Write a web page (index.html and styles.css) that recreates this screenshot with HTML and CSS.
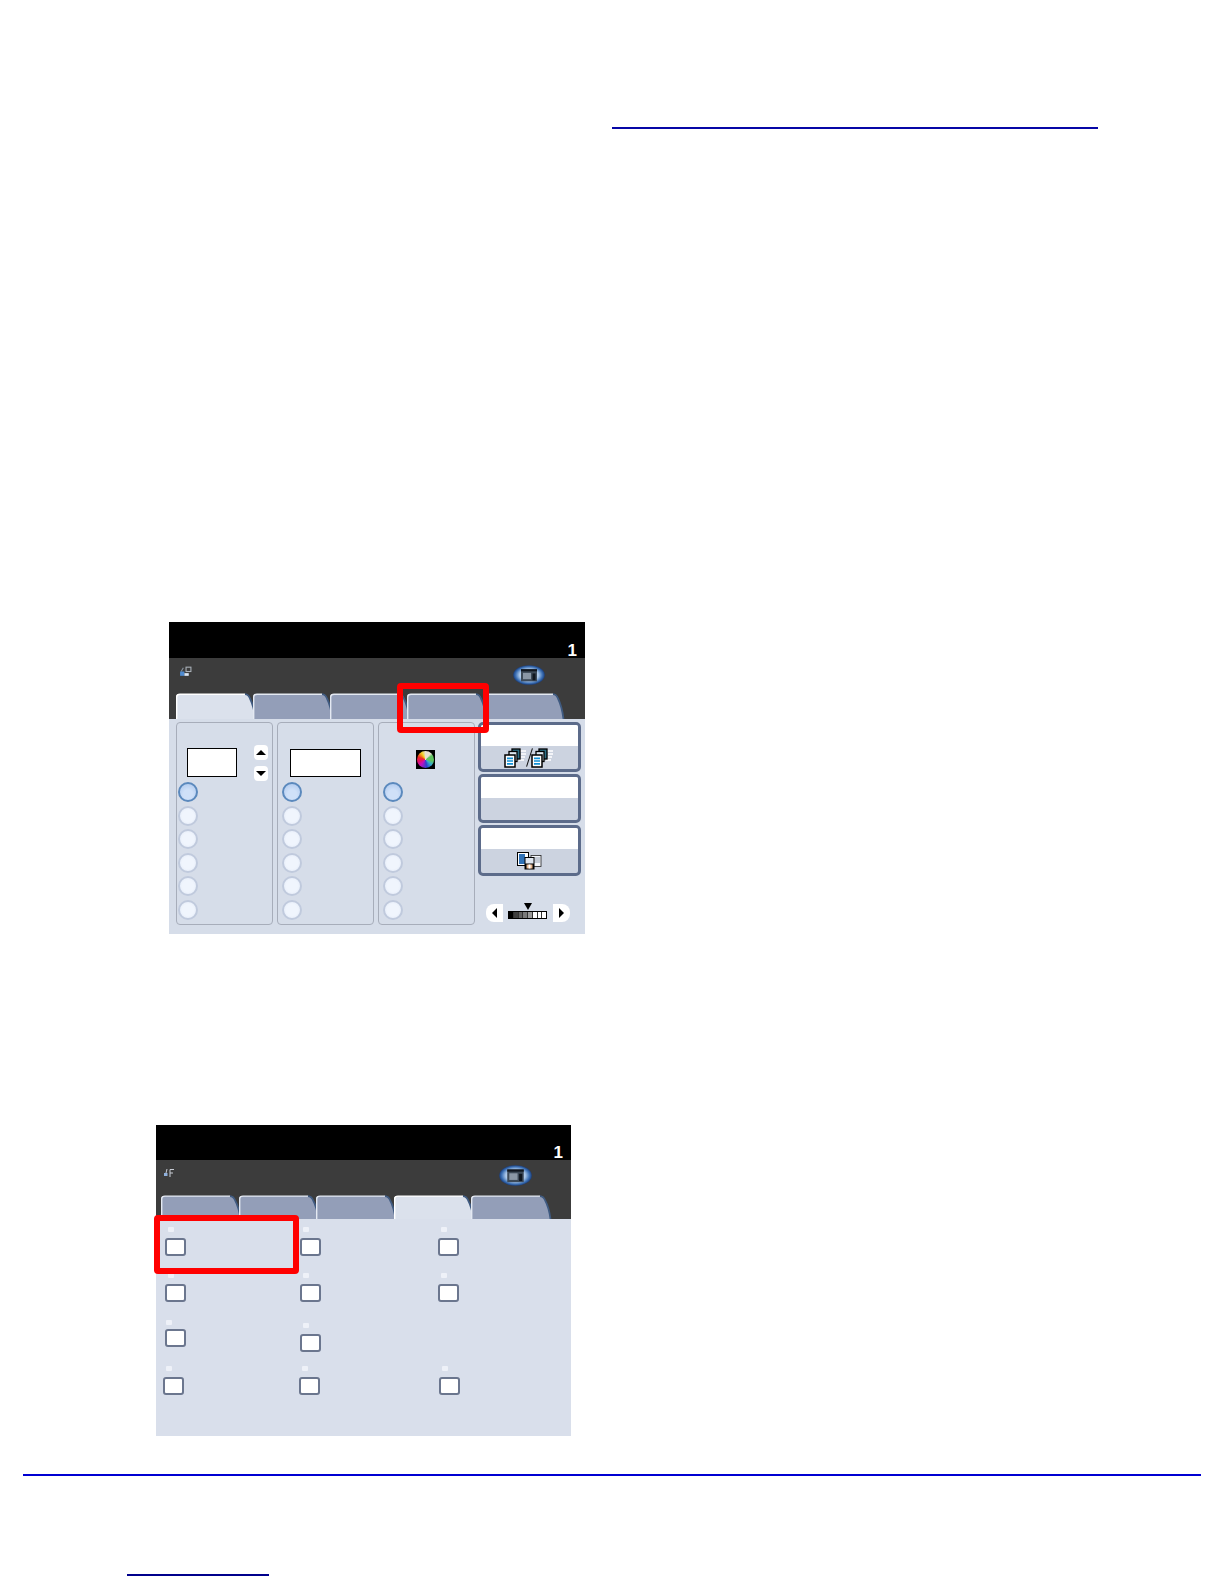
FILE: index.html
```html
<!DOCTYPE html>
<html lang="en">
<head>
<meta charset="utf-8">
<title>Copy screens</title>
<link rel="stylesheet" href="styles.css">
</head>
<body>
<svg class="defs" width="0" height="0" aria-hidden="true">
  <defs>
    <radialGradient id="oval" cx="50%" cy="50%" r="50%">
      <stop offset="0" stop-color="#f2f7fd"/>
      <stop offset="0.6" stop-color="#a9c6e8"/>
      <stop offset="0.85" stop-color="#3c70b4"/>
      <stop offset="1" stop-color="#1b3f7d"/>
    </radialGradient>
    <symbol id="tab" viewBox="0 0 81 26" preserveAspectRatio="none">
      <path class="tab-fill" d="M0 26V4Q0 1 4 1H69Q72.500 1 74 5Q78 13 79.500 26Z"/>
      <path class="tab-light" d="M.7 26V4Q.7 1.200 4 1.200H69"/>
      <path class="tab-dark" d="M69 1.200Q72.500 1.500 74 5.500Q78 13.500 79.500 26"/>
    </symbol>
    <symbol id="ovalicon" viewBox="0 0 32 19" preserveAspectRatio="none">
      <ellipse cx="16" cy="9.500" rx="15.800" ry="9.300" fill="url(#oval)"/>
      <rect x="8" y="4" width="16" height="11.500" fill="#3d4a58"/>
      <rect x="8" y="4" width="16" height="2" fill="#10161f"/>
      <rect x="10" y="7.500" width="8" height="6" fill="#8a97a6"/>
      <rect x="19.500" y="8" width="3" height="6.500" fill="#10161f"/>
    </symbol>
    <symbol id="stack" viewBox="0 0 24 20">
      <path d="M16 3h6M17 6h5M17 9h4M15 12h5" stroke="#fff" stroke-width="1.300"/>
      <rect x="8" y="1" width="8" height="10" fill="#2e6f86" stroke="#000" stroke-width="1.300"/>
      <rect x="5" y="3.500" width="8" height="10" fill="#dfe9f2" stroke="#000" stroke-width="1.300"/>
      <rect x="1" y="7" width="10" height="12" fill="#fff" stroke="#000" stroke-width="1.500"/>
      <path d="M3 10.300h6M3 13h6M3 15.800h6" stroke="#1391d6" stroke-width="1.700"/>
    </symbol>
  </defs>
</svg>

<main class="page">
  <div class="link-line line-top"></div>

  <section class="screen screen-a">
    <header class="screen-head"><span class="count">1</span></header>
    <div class="screen-bar">
      <div class="bar-top">
        <svg class="mini-icon" viewBox="0 0 12 10" aria-hidden="true"><rect x="6.500" y="1" width="4.500" height="4" fill="none" stroke="#a9b0b8" stroke-width="1"/><path d="M4 1.500L2 5" stroke="#8a94a0" stroke-width="1"/><rect x="1" y="5" width="4" height="4" fill="#4f8bd0"/><rect x="5" y="6.500" width="4" height="2.500" fill="#dbe6f4"/></svg>
        <svg class="oval-icon" aria-hidden="true"><use href="#ovalicon"/></svg>
      </div>
      <div class="tabs">
        <svg class="tab is-active" aria-hidden="true"><use href="#tab"/></svg>
        <svg class="tab" aria-hidden="true"><use href="#tab"/></svg>
        <svg class="tab" aria-hidden="true"><use href="#tab"/></svg>
        <svg class="tab" aria-hidden="true"><use href="#tab"/></svg>
        <svg class="tab" aria-hidden="true"><use href="#tab"/></svg>
      </div>
    </div>
    <div class="screen-body">
      <div class="panel">
        <div class="panel-top top-spin">
          <div class="field field-short"></div>
          <div class="spin">
            <span class="spin-btn"><span class="tri tri-up"></span></span>
            <span class="spin-btn"><span class="tri tri-down"></span></span>
          </div>
        </div>
        <div class="radios">
          <span class="radio is-on"></span><span class="radio"></span><span class="radio"></span><span class="radio"></span><span class="radio"></span><span class="radio"></span>
        </div>
      </div>
      <div class="panel panel-b">
        <div class="panel-top top-field">
          <div class="field field-long"></div>
        </div>
        <div class="radios">
          <span class="radio is-on"></span><span class="radio"></span><span class="radio"></span><span class="radio"></span><span class="radio"></span><span class="radio"></span>
        </div>
      </div>
      <div class="panel panel-c">
        <div class="panel-top top-wheel">
          <div class="wheel-box"><span class="wheel"></span></div>
        </div>
        <div class="radios">
          <span class="radio is-on"></span><span class="radio"></span><span class="radio"></span><span class="radio"></span><span class="radio"></span><span class="radio"></span>
        </div>
      </div>
      <div class="side">
        <div class="big-btn btn-one">
          <div class="btn-white"></div>
          <div class="btn-low">
            <svg class="stack" aria-hidden="true"><use href="#stack"/></svg>
            <span class="slash"></span>
            <svg class="stack" aria-hidden="true"><use href="#stack"/></svg>
          </div>
        </div>
        <div class="big-btn btn-two">
          <div class="btn-white"></div>
          <div class="btn-low"></div>
        </div>
        <div class="big-btn btn-three">
          <div class="btn-white"></div>
          <div class="btn-low">
            <svg class="sample" viewBox="0 0 25 18" aria-hidden="true">
              <rect x=".5" y=".5" width="11" height="13" fill="#fff" stroke="#000"/>
              <rect x="2" y="2" width="6" height="10" fill="#2f72b8"/>
              <rect x="14" y="3.500" width="10" height="11" fill="#f4f6fa" stroke="#222" stroke-width=".8"/>
              <path d="M16 6h7M16 8h7M16 10h7" stroke="#7c8aa0" stroke-width=".8"/>
              <rect x="7.500" y="5" width="10" height="12.500" fill="#000"/>
              <rect x="8.500" y="6" width="8" height="5.500" fill="#dfe6f0"/>
              <rect x="9.500" y="12.500" width="6" height="4" fill="#e8b890"/>
              <rect x="11.500" y="12.500" width="2" height="4" fill="#fff"/>
            </svg>
          </div>
        </div>
        <div class="pager">
          <span class="pager-btn pager-prev"><span class="tri tri-left"></span></span>
          <div class="meter">
            <span class="tri tri-down meter-mark"></span>
            <div class="meter-cells">
              <span class="cell c1"></span><span class="cell c2"></span><span class="cell c3"></span><span class="cell c4"></span><span class="cell c5"></span><span class="cell"></span><span class="cell"></span><span class="cell"></span>
            </div>
          </div>
          <span class="pager-btn pager-next"><span class="tri tri-right"></span></span>
        </div>
      </div>
    </div>
    <div class="callout callout-a"></div>
  </section>

  <section class="screen screen-b">
    <header class="screen-head"><span class="count">1</span></header>
    <div class="screen-bar">
      <div class="bar-top">
        <svg class="mini-icon" viewBox="0 0 12 10" aria-hidden="true"><rect x="1" y="5" width="3.500" height="3" fill="#8fb0dc"/><path d="M3 5L4 1M7 9V1.500h4M7 5h3" fill="none" stroke="#c8ccd4" stroke-width="1"/></svg>
        <svg class="oval-icon" aria-hidden="true"><use href="#ovalicon"/></svg>
      </div>
      <div class="tabs">
        <svg class="tab" aria-hidden="true"><use href="#tab"/></svg>
        <svg class="tab" aria-hidden="true"><use href="#tab"/></svg>
        <svg class="tab" aria-hidden="true"><use href="#tab"/></svg>
        <svg class="tab is-active" aria-hidden="true"><use href="#tab"/></svg>
        <svg class="tab" aria-hidden="true"><use href="#tab"/></svg>
      </div>
    </div>
    <div class="screen-body options">
      <div class="option"><span class="dot"></span><span class="check"></span></div>
      <div class="option"><span class="dot"></span><span class="check"></span></div>
      <div class="option"><span class="dot"></span><span class="check"></span></div>
      <div class="option"><span class="dot"></span><span class="check"></span></div>
      <div class="option"><span class="dot"></span><span class="check"></span></div>
      <div class="option"><span class="dot"></span><span class="check"></span></div>
      <div class="option option-tight"><span class="dot"></span><span class="check"></span></div>
      <div class="option option-low"><span class="dot"></span><span class="check"></span></div>
      <div class="option"></div>
      <div class="option option-out"><span class="dot"></span><span class="check"></span></div>
      <div class="option option-nudge"><span class="dot"></span><span class="check"></span></div>
      <div class="option option-in"><span class="dot"></span><span class="check"></span></div>
    </div>
    <div class="callout callout-b"></div>
  </section>

  <div class="rule"></div>
  <div class="link-line line-foot"></div>
</main>
</body>
</html>
```
FILE: styles.css
```css
* { box-sizing: border-box; }
html, body { margin: 0; background: #fff; }
body { font-family: "Liberation Sans", Arial, sans-serif; }
.defs { position: absolute; }

.page { height: 1584px; padding-top: 127px; overflow: hidden; }
.link-line { height: 2px; background: #0707a6; }
.line-top { width: 486px; margin-left: 612px; }
.rule { height: 2px; width: 1178px; margin: 38px 0 0 23px; background: #0000d2; }
.line-foot { width: 142px; margin: 98px 0 0 127px; background: #00008c; }

/* device screens */
.screen { position: relative; }
.screen-a { width: 416px; margin: 493px 0 0 169px; }
.screen-b { width: 415px; margin: 191px 0 0 156px; }

.screen-head { height: 36px; background: #000; display: flex; justify-content: flex-end; align-items: flex-end; padding: 0 8px 0 0; }
.screen-b .screen-head { height: 35px; padding-right: 8px; }
.count { color: #fff; font-weight: 700; font-size: 17px; line-height: 15px; }

.screen-bar { height: 61px; background: #3c3c3c; display: flex; flex-direction: column; }
.screen-b .screen-bar { height: 59px; }
.bar-top { height: 35px; position: relative; }
.mini-icon { position: absolute; left: 10px; top: 8px; width: 13px; height: 11px; }
.screen-b .mini-icon { left: 7px; top: 8px; width: 12px; height: 10px; }
.oval-icon { position: absolute; left: 344px; top: 7px; width: 32px; height: 20px; }
.screen-b .oval-icon { left: 343px; top: 5px; width: 33px; height: 21px; }

.tabs { display: flex; height: 26px; padding-left: 7px; }
.screen-b .tabs { height: 24px; padding-left: 5px; }
.tab { --tab-bg: #939eb8; --tab-top: #e4e9f2; width: 81px; height: 100%; margin-right: -4px; flex: none; display: block; }
.screen-b .tab { margin-right: -3.5px; }
.tab.is-active { --tab-bg: #dbe1ec; --tab-top: #fff; }
.tab-fill { fill: var(--tab-bg); }
.tab-light { fill: none; stroke: var(--tab-top); stroke-width: 1.4; }
.tab-dark { fill: none; stroke: #3f5a80; stroke-width: 1.8; }

.screen-body { background: #d6dde9; }
.screen-a .screen-body { height: 215px; display: flex; padding: 3px 0 0 7px; }

/* panels */
.panel { width: 97px; height: 203px; border: 1px solid #a7adba; border-radius: 4px; margin-right: 4px; flex: none; }
.panel-c { margin-right: 3px; }
.panel-top { height: 59px; position: relative; }
.top-spin { display: flex; padding: 25px 0 0 10px; }
.field { background: #fff; border: 1px solid #000; }
.field-short { width: 50px; height: 29px; }
.field-long { width: 71px; height: 28px; }
.top-field { padding: 26px 0 0 12px; }
.top-wheel { padding: 27px 0 0 37px; }

.spin { display: flex; flex-direction: column; gap: 6px; margin: -3px 0 0 17px; }
.spin-btn { width: 14px; height: 15px; background: #fff; border-radius: 4px; display: flex; align-items: center; justify-content: center; }
.tri { display: block; width: 0; height: 0; }
.tri-up { border-left: 5px solid transparent; border-right: 5px solid transparent; border-bottom: 5px solid #000; }
.tri-down { border-left: 5px solid transparent; border-right: 5px solid transparent; border-top: 5px solid #000; }
.tri-left { border-top: 5px solid transparent; border-bottom: 5px solid transparent; border-right: 5px solid #000; }
.tri-right { border-top: 5px solid transparent; border-bottom: 5px solid transparent; border-left: 5px solid #000; }

.wheel-box { width: 19px; height: 19px; background: #000; display: flex; align-items: center; justify-content: center; }
.wheel { width: 17px; height: 17px; border-radius: 50%; background: conic-gradient(#e8e0d0 0 40deg, #5fc25f 60deg 100deg, #36b0c8 130deg, #2a3fd0 170deg, #c010c0 220deg, #e81060 260deg, #f03020 290deg, #f0d020 330deg, #e8e0d0 360deg); }

.radios { display: flex; flex-direction: column; gap: 3.6px; padding-left: 1px; }
.panel-b .radios { padding-left: 4px; }
.panel-c .radios { padding-left: 4px; }
.radio { width: 20px; height: 20px; border-radius: 50%; border: 2.5px solid #c0cadd; background: radial-gradient(circle at 50% 50%, #f0f5fd 0 50%, #e0e8f6 100%); filter: blur(.4px); }
.radio.is-on { border: 2.5px solid #5b89bd; background: radial-gradient(circle at 50% 65%, #cfe0f8 0 35%, #a9c5ec 100%); }

/* side buttons */
.side { width: 103px; flex: none; display: flex; flex-direction: column; gap: 2px; }
.big-btn { border: 3px solid #5c6b8a; border-radius: 5px; background: #ccd3e0; display: flex; flex-direction: column; overflow: hidden; }
.btn-one { height: 50px; }
.btn-two { height: 49px; }
.btn-three { height: 51px; }
.btn-white { background: #fff; height: 21px; flex: none; }
.btn-low { flex: 1; display: flex; align-items: center; justify-content: center; gap: 1px; }
.stack { width: 24px; height: 20px; }
.slash { width: 1px; height: 19px; background: #111; transform: rotate(18deg); }
.sample { width: 25px; height: 18px; }

.pager { display: flex; align-items: flex-start; margin-top: 26px; padding-left: 8px; }
.pager-btn { width: 17px; height: 18px; background: #fff; display: flex; align-items: center; justify-content: center; flex: none; }
.pager-prev { border-radius: 8px 0 0 8px; }
.pager-next { border-radius: 0 8px 8px 0; margin-left: 6px; }
.meter { width: 39px; margin-left: 5px; display: flex; flex-direction: column; align-items: center; margin-top: -1px; gap: 1px; }
.meter-mark { border-left-width: 4px; border-right-width: 4px; border-top-width: 7px; }
.meter-cells { display: flex; width: 39px; height: 8px; border: 1px solid #000; background: #fff; }
.cell { flex: 1; border-right: 1px solid #333; }
.cell:last-child { border-right: 0; }
.c1 { background: #000; }
.c2 { background: #3f3f3f; }
.c3 { background: #616161; }
.c4 { background: #7a7a7a; }
.c5 { background: #9a9a9a; }

/* options grid */
.options { height: 217px; display: grid; grid-template-columns: 135px 138px 1fr; grid-template-rows: 46px 47px 46px 46px; padding: 8px 0 0 9px; background: #d9dfeb; }
.option { display: flex; flex-direction: column; align-items: flex-start; }
.dot { width: 6px; height: 5px; background: #eef1f8; border-radius: 1px; margin-left: 3px; }
.check { width: 21px; height: 18px; margin-top: 6px; background: #fff; border: 2px solid #6b768e; border-radius: 3px; }
.option-tight .check { margin-top: 4px; }
.option-tight .dot { margin-left: 1px; }
.option-low { padding-top: 3px; }
.option-out { margin-left: -2px; }
.option-nudge { margin-left: -1px; }
.option-in { margin-left: 1px; }

/* red callouts */
.callout { position: absolute; border: 6px solid #f00; border-radius: 4px; }
.callout-a { left: 228px; top: 61px; width: 92px; height: 50px; }
.callout-b { left: -2px; top: 90px; width: 145px; height: 59px; }
```
